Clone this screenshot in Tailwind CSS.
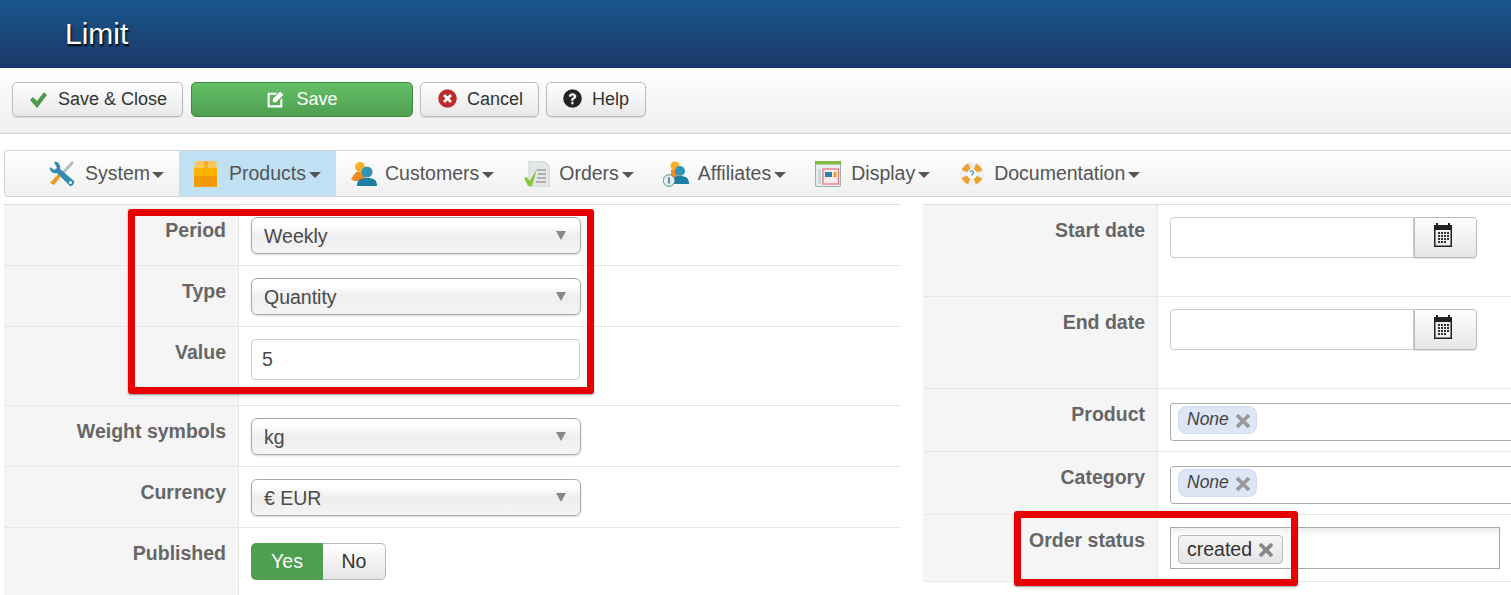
<!DOCTYPE html>
<html><head><meta charset="utf-8"><script src="https://cdn.jsdelivr.net/npm/@tailwindcss/browser@4"></script></head>
<body class="bg-white font-['Liberation_Sans',Arial,sans-serif] overflow-hidden">
<div class="relative w-[1511px] h-[595px] overflow-hidden">
<header class="h-[68px] bg-gradient-to-b from-[#17568c] to-[#1a3867] pl-[65px] pt-[16px] text-[30px] leading-[36px] text-white [text-shadow:1px_2px_2px_#000]">Limit</header>
<div class="h-[66px] bg-gradient-to-b from-white to-[#eeeeee] border-b border-[#d4d4d4] pl-3 pt-[14px] flex gap-[7px] text-[18px] text-[#333]">
 <button class="w-[171px] h-[35px] mr-px flex items-center pl-[16px] gap-[10px] rounded-[5px] border border-[#bbb] bg-gradient-to-b from-white to-[#e8e8e8] shadow-[0_1px_1px_rgba(0,0,0,.1)]"><svg class="w-[19px] h-[17px]" viewBox="0 0 19 17"><path d="M1 9l3-3 4 4 7-9 3 3-10 13z" fill="#4f9a4f"/></svg><span>Save &amp; Close</span></button>
 <button class="w-[222px] h-[35px] flex items-center justify-center gap-[11px] rounded-[5px] border border-[#3f8a3f] bg-gradient-to-b from-[#64c066] to-[#4f9f52] text-white"><svg class="w-[19px] h-[19px]" viewBox="0 0 18 18"><path d="M1.500 2.500h9.500l-1.800 2H3.500v10h10V9.500l2-2v9h-14z" fill="#fff"/><path d="M6.500 8.500l7-7 3 3-7 7h-3z" fill="#fff"/></svg><span>Save</span></button>
 <button class="w-[119px] h-[35px] flex items-center pl-[17px] gap-[10px] rounded-[5px] border border-[#bbb] bg-gradient-to-b from-white to-[#e8e8e8] shadow-[0_1px_1px_rgba(0,0,0,.1)]"><svg class="w-[19px] h-[19px] -mt-[2px]" viewBox="0 0 19 19"><circle cx="9.500" cy="9.500" r="9.300" fill="#bd2c2c"/><path d="M6 6l7 7M13 6l-7 7" stroke="#fff" stroke-width="2.800"/></svg><span>Cancel</span></button>
 <button class="w-[100px] h-[35px] flex items-center pl-[16px] gap-[10px] rounded-[5px] border border-[#bbb] bg-gradient-to-b from-white to-[#e8e8e8] shadow-[0_1px_1px_rgba(0,0,0,.1)]"><svg class="w-[19px] h-[19px] -mt-[2px]" viewBox="0 0 19 19"><circle cx="9.500" cy="9.500" r="9.300" fill="#222"/><path d="M6 7.300c.3-3.900 7-3.800 7 .1 0 2.400-2.900 2.300-2.900 4.100H8.400c-.2-3 2.500-2.600 2.500-4.100 0-1.400-2.600-1.400-2.800.1z" fill="#fff" stroke="#fff" stroke-width=".5"/><rect x="8.300" y="12.800" width="2.200" height="2.500" fill="#fff"/></svg><span>Help</span></button>
</div>

<nav class="mt-4 ml-1 h-[47px] rounded-l-[4px] border border-r-0 border-[#d4d4d4] bg-gradient-to-b from-white to-[#f0f0f0] pl-[29px] flex text-[19.500px] text-[#555]">
 <a class="flex items-center px-[15px]"><svg class="w-[26px] h-[26px] mr-[10px]" viewBox="0 0 26 26"><path d="M25 2L13 15l-2-2L23 0z" fill="#b4bcc0"/><path d="M13 14l-8 10-4-2 9-10z" fill="#f09a22"/><path d="M1 6l4 3 3-2-3-6C9 0 12 4 11 8l14 12c1 2-2 6-4 5L8 12C4 13 0 10 1 6z" fill="#2f8bb0"/><circle cx="21.500" cy="21.500" r="1.500" fill="#fff"/></svg>System<svg class="w-3 h-[6px] ml-[2px] mt-[3px]" viewBox="0 0 12 6"><path d="M0 0h12L6 6z" fill="#555"/></svg></a>
 <a class="flex items-center px-[15px] bg-[#c0e0f3]"><svg class="w-[26px] h-[26px] mr-[9px]" viewBox="0 0 26 26"><path d="M2 0h20l1 7H0z" fill="#fcc65a"/><path d="M0 7h23v19H0z" fill="#fdb100"/><path d="M0 15h23v11H0z" fill="#f29b05"/><path d="M10 0h4v7h-4z" fill="#f9ae2c"/></svg>Products<svg class="w-3 h-[6px] ml-[3px] mt-[3px]" viewBox="0 0 12 6"><path d="M0 0h12L6 6z" fill="#555"/></svg></a>
 <a class="flex items-center px-[15px]"><svg class="w-[26px] h-[26px] mr-[8px]" viewBox="0 0 26 26"><circle cx="9" cy="6" r="5" fill="#f8b02c"/><path d="M0 18l5-7h9v9H3z" fill="#ef8c20"/><circle cx="16" cy="11" r="5.500" fill="#3093ba"/><path d="M6 25c0-6 3-8 10-8s10 2 10 8z" fill="#1a7ea5"/></svg>Customers<svg class="w-3 h-[6px] ml-[3px] mt-[3px]" viewBox="0 0 12 6"><path d="M0 0h12L6 6z" fill="#555"/></svg></a>
 <a class="flex items-center px-[15px]"><svg class="w-[26px] h-[26px] mr-[9px]" viewBox="0 0 26 26"><path d="M5 0h15l6 6v20H5z" fill="#e4e7e7" stroke="#c4c8c8" stroke-width=".8"/><path d="M13 9h9M14 13h8M13 17h9M12 21h10" stroke="#9aa0a0" stroke-width="1.300"/><path d="M0 17l3-1 2.500 4L13 8l-5 17H4z" fill="#8cc63f"/></svg>Orders<svg class="w-3 h-[6px] ml-[3px] mt-[3px]" viewBox="0 0 12 6"><path d="M0 0h12L6 6z" fill="#555"/></svg></a>
 <a class="flex items-center pl-[14px] pr-[15px]"><svg class="w-[26px] h-[26px] mr-[9px]" viewBox="0 0 26 26"><circle cx="12" cy="5" r="4.500" fill="#f8b02c"/><path d="M8 9h7v7H8z" fill="#ef8c20"/><circle cx="17" cy="10" r="5" fill="#3093ba"/><path d="M8 23c0-6 3-8 9-8s9 2 9 8z" fill="#1a7ea5"/><circle cx="6" cy="19.500" r="5.800" fill="#e6edf0" stroke="#5f8ca3"/><path d="M6 16.500v6" stroke="#3a6a85" stroke-width="1.500"/></svg>Affiliates<svg class="w-3 h-[6px] ml-[3px] mt-[3px]" viewBox="0 0 12 6"><path d="M0 0h12L6 6z" fill="#555"/></svg></a>
 <a class="flex items-center pl-[14px] pr-[15px]"><svg class="w-[26px] h-[26px] mr-[10px]" viewBox="0 0 26 26"><rect x=".5" y=".5" width="25" height="25" rx="1.500" fill="#e8eef0" stroke="#9fb0b5"/><path d="M0 0h26v3.500H0z" fill="#7fb93f"/><rect x="8" y="8" width="15.500" height="15" fill="#fbeaea" stroke="#e27c7c" stroke-width="1.300"/><rect x="10" y="11" width="7" height="5" fill="#2b7fb0"/><rect x="18.500" y="11" width="3" height="5" fill="#e9a02c"/><path d="M3 8h3v15H3z" fill="#cdd6d9"/></svg>Display<svg class="w-3 h-[6px] ml-[3px] mt-[3px]" viewBox="0 0 12 6"><path d="M0 0h12L6 6z" fill="#555"/></svg></a>
 <a class="flex items-center px-[14px]"><svg class="w-[26px] h-[26px] mr-[9px]" viewBox="0 0 26 26"><circle cx="13" cy="13" r="12" fill="#efefef"/><circle cx="13" cy="13" r="8" fill="none" stroke="#f0a030" stroke-width="6" stroke-dasharray="7 5.570" stroke-dashoffset="3.500" transform="rotate(45 13 13)"/><circle cx="13" cy="13" r="4.500" fill="#fff"/><path d="M11 11c1-2 4-1 3.500 1l-1.500 1.500v1" fill="none" stroke="#3a8fc0" stroke-width="1.300"/></svg>Documentation<svg class="w-3 h-[6px] ml-[3px] mt-[3px]" viewBox="0 0 12 6"><path d="M0 0h12L6 6z" fill="#555"/></svg></a>
</nav>

<main class="mt-[7px] flex text-[19.500px] text-[#4a4a4a]">
 <section class="ml-1 w-[896px] border-t border-[#ddd]">
  <div class="h-[61px] flex border-b border-[#e6e6e6]"><div class="w-[235px] shrink-0 bg-[#f5f5f5] border-r border-[#e8e8e8] text-right pr-3 pt-[12px] font-bold text-[#666] leading-[26px]">Period</div><div class="pl-3 pt-3"><div class="w-[330px] h-[37px] rounded-[6px] border border-[#aaa] bg-[linear-gradient(#fff_0%,#fff_20%,#eeeeee_50%,#f4f4f4_100%)] shadow-[0_1px_2px_rgba(0,0,0,.15)] pl-3 flex items-center justify-between pr-[14px]"><span class="mt-[2px]">Weekly</span><svg class="w-[10px] h-[9px]" viewBox="0 0 10 9"><path d="M0 0h10L5 9z" fill="#888"/></svg></div></div></div>
  <div class="h-[61px] flex border-b border-[#e6e6e6]"><div class="w-[235px] shrink-0 bg-[#f5f5f5] border-r border-[#e8e8e8] text-right pr-3 pt-[12px] font-bold text-[#666] leading-[26px]">Type</div><div class="pl-3 pt-3"><div class="w-[330px] h-[37px] rounded-[6px] border border-[#aaa] bg-[linear-gradient(#fff_0%,#fff_20%,#eeeeee_50%,#f4f4f4_100%)] shadow-[0_1px_2px_rgba(0,0,0,.15)] pl-3 flex items-center justify-between pr-[14px]"><span class="mt-[2px]">Quantity</span><svg class="w-[10px] h-[9px]" viewBox="0 0 10 9"><path d="M0 0h10L5 9z" fill="#888"/></svg></div></div></div>
  <div class="h-[79px] flex border-b border-[#e6e6e6]"><div class="w-[235px] shrink-0 bg-[#f5f5f5] border-r border-[#e8e8e8] text-right pr-3 pt-[12px] font-bold text-[#666] leading-[26px]">Value</div><div class="pl-3 pt-3"><div class="w-[329px] h-[41px] rounded-[4px] border border-[#ccc] bg-white pl-[10px] flex items-center"><span>5</span></div></div></div>
  <div class="h-[61px] flex border-b border-[#e6e6e6]"><div class="w-[235px] shrink-0 bg-[#f5f5f5] border-r border-[#e8e8e8] text-right pr-3 pt-[12px] font-bold text-[#666] leading-[26px]">Weight symbols</div><div class="pl-3 pt-3"><div class="w-[330px] h-[37px] rounded-[6px] border border-[#aaa] bg-[linear-gradient(#fff_0%,#fff_20%,#eeeeee_50%,#f4f4f4_100%)] shadow-[0_1px_2px_rgba(0,0,0,.15)] pl-3 flex items-center justify-between pr-[14px]"><span class="mt-[2px]">kg</span><svg class="w-[10px] h-[9px]" viewBox="0 0 10 9"><path d="M0 0h10L5 9z" fill="#888"/></svg></div></div></div>
  <div class="h-[61px] flex border-b border-[#e6e6e6]"><div class="w-[235px] shrink-0 bg-[#f5f5f5] border-r border-[#e8e8e8] text-right pr-3 pt-[12px] font-bold text-[#666] leading-[26px]">Currency</div><div class="pl-3 pt-3"><div class="w-[330px] h-[37px] rounded-[6px] border border-[#aaa] bg-[linear-gradient(#fff_0%,#fff_20%,#eeeeee_50%,#f4f4f4_100%)] shadow-[0_1px_2px_rgba(0,0,0,.15)] pl-3 flex items-center justify-between pr-[14px]"><span class="mt-[2px]">€ EUR</span><svg class="w-[10px] h-[9px]" viewBox="0 0 10 9"><path d="M0 0h10L5 9z" fill="#888"/></svg></div></div></div>
  <div class="h-[68px] flex border-b border-[#e6e6e6]"><div class="w-[235px] shrink-0 bg-[#f5f5f5] border-r border-[#e8e8e8] text-right pr-3 pt-[12px] font-bold text-[#666] leading-[26px]">Published</div><div class="pl-3 pt-[15px]"><div class="flex h-[37px] w-[135px]"><div class="w-[72px] rounded-l-[5px] bg-[#4ea050] text-white flex items-center justify-center">Yes</div><div class="w-[63px] rounded-r-[5px] border border-l-0 border-[#bbb] bg-gradient-to-b from-white to-[#e6e6e6] text-[#333] flex items-center justify-center">No</div></div></div></div>
 </section>
 <section class="ml-[23px] w-[588px] shrink-0 border-t border-[#ddd]">
  <div class="h-[92px] flex border-b border-[#e6e6e6]"><div class="w-[235px] shrink-0 bg-[#f5f5f5] border-r border-[#e8e8e8] text-right pr-3 pt-[12px] font-bold text-[#666] leading-[26px]">Start date</div><div class="pl-3 pt-3 flex items-start"><div class="w-[244px] h-[41px] rounded-l-[4px] border border-[#ccc] bg-white"></div><button class="w-[63px] h-[41px] rounded-r-[4px] border border-l border-[#bbb] bg-gradient-to-b from-white to-[#e6e6e6] shadow-[0_1px_1px_rgba(0,0,0,.15)] flex items-center justify-center pr-[6px]"><svg class="w-5 h-6 -mt-[5px]" viewBox="0 0 20 24"><path d="M1 2h2V0h2v2h10V0h2v2h2v22H1z" fill="#222"/><rect x="2.500" y="7" width="15" height="15.500" fill="#eee"/><path d="M5 9h2v2H5zM8 9h2v2H8zM11 9h2v2h-2zM14 9h2v2h-2zM5 12h2v2H5zM8 12h2v2H8zM11 12h2v2h-2zM14 12h2v2h-2zM5 15h2v2H5zM8 15h2v2H8zM11 15h2v2h-2zM14 15h2v2h-2zM5 18h2v2H5zM8 18h2v2H8zM11 18h2v2h-2z" fill="#333"/></svg></button></div></div>
  <div class="h-[92px] flex border-b border-[#e6e6e6]"><div class="w-[235px] shrink-0 bg-[#f5f5f5] border-r border-[#e8e8e8] text-right pr-3 pt-[12px] font-bold text-[#666] leading-[26px]">End date</div><div class="pl-3 pt-3 flex items-start"><div class="w-[244px] h-[41px] rounded-l-[4px] border border-[#ccc] bg-white"></div><button class="w-[63px] h-[41px] rounded-r-[4px] border border-l border-[#bbb] bg-gradient-to-b from-white to-[#e6e6e6] shadow-[0_1px_1px_rgba(0,0,0,.15)] flex items-center justify-center pr-[6px]"><svg class="w-5 h-6 -mt-[5px]" viewBox="0 0 20 24"><path d="M1 2h2V0h2v2h10V0h2v2h2v22H1z" fill="#222"/><rect x="2.500" y="7" width="15" height="15.500" fill="#eee"/><path d="M5 9h2v2H5zM8 9h2v2H8zM11 9h2v2h-2zM14 9h2v2h-2zM5 12h2v2H5zM8 12h2v2H8zM11 12h2v2h-2zM14 12h2v2h-2zM5 15h2v2H5zM8 15h2v2H8zM11 15h2v2h-2zM14 15h2v2h-2zM5 18h2v2H5zM8 18h2v2H8zM11 18h2v2h-2z" fill="#333"/></svg></button></div></div>
  <div class="h-[63px] flex border-b border-[#e6e6e6]"><div class="w-[235px] shrink-0 bg-[#f5f5f5] border-r border-[#e8e8e8] text-right pr-3 pt-[12px] font-bold text-[#666] leading-[26px]">Product</div><div class="pl-3 pt-[14px] shrink-0"><div class="w-[350px] h-[38px] rounded-[3px] border border-[#aaa] bg-white pl-[7px] pt-[2px] flex items-start"><span class="flex items-center h-[28px] w-[79px] pl-2 gap-[6px] rounded-[8px] border border-[#cfdcf5] bg-[#dee6f6] italic text-[17.500px] text-[#444]"><span class="-mt-[1px]">None</span><svg class="w-4 h-4 mt-[1px]" viewBox="0 0 16 16"><path d="M2 2l12 12M14 2L2 14" stroke="#999" stroke-width="3.800"/></svg></span></div></div></div>
  <div class="h-[63px] flex border-b border-[#e6e6e6]"><div class="w-[235px] shrink-0 bg-[#f5f5f5] border-r border-[#e8e8e8] text-right pr-3 pt-[12px] font-bold text-[#666] leading-[26px]">Category</div><div class="pl-3 pt-[14px] shrink-0"><div class="w-[350px] h-[38px] rounded-[3px] border border-[#aaa] bg-white pl-[7px] pt-[2px] flex items-start"><span class="flex items-center h-[28px] w-[79px] pl-2 gap-[6px] rounded-[8px] border border-[#cfdcf5] bg-[#dee6f6] italic text-[17.500px] text-[#444]"><span class="-mt-[1px]">None</span><svg class="w-4 h-4 mt-[1px]" viewBox="0 0 16 16"><path d="M2 2l12 12M14 2L2 14" stroke="#999" stroke-width="3.800"/></svg></span></div></div></div>
  <div class="h-[67px] flex border-b border-[#e6e6e6]"><div class="w-[235px] shrink-0 bg-[#f5f5f5] border-r border-[#e8e8e8] text-right pr-3 pt-[12px] font-bold text-[#666] leading-[26px]">Order status</div><div class="pl-3 pt-3"><div class="w-[330px] h-[42px] border border-[#aaa] bg-[linear-gradient(#eee_0%,#fff_20%,#fff_100%)] pl-[7px] pt-[7px] flex items-start"><span class="flex items-center h-[29px] w-[105px] pl-2 gap-[6px] rounded-[4px] border border-[#bbb] bg-gradient-to-b from-[#f6f6f6] to-[#e4e4e4] text-[#333]"><span>created</span><svg class="w-4 h-4" viewBox="0 0 16 16"><path d="M2 2l12 12M14 2L2 14" stroke="#888" stroke-width="3.800"/></svg></span></div></div></div>
 </section>
</main>

<div class="absolute left-[128px] top-[209px] w-[466px] h-[185px] border-[7px] border-[#e60000] rounded-[3px] shadow-[0_1px_2px_rgba(0,0,0,.4)]"></div>
<div class="absolute left-[1014px] top-[511px] w-[284px] h-[75px] border-[7px] border-[#e60000] rounded-[3px] shadow-[0_1px_2px_rgba(0,0,0,.4)]"></div>
</div>
</body></html>
